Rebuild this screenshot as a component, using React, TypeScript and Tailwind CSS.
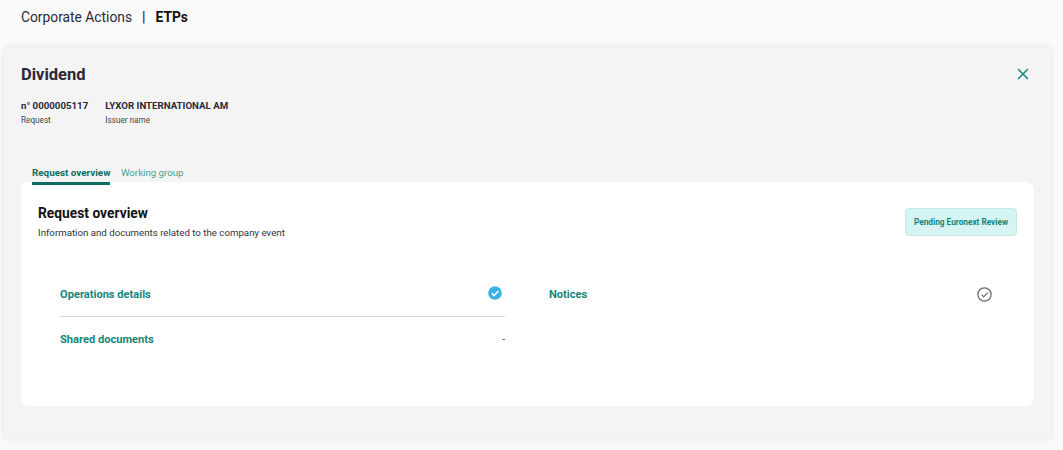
import React from 'react';
import { X } from 'lucide-react';

function DoneIcon() {
  return (
    <svg width="14" height="14" viewBox="0 0 14 14" fill="none">
      <circle cx="7" cy="7" r="6.8" fill="#3cb1e3" />
      <path d="M3.7 7.2 6 9.5 10.4 5" stroke="#fff" strokeWidth="1.6" />
    </svg>
  );
}

function PendingIcon() {
  return (
    <svg width="15" height="15" viewBox="0 0 15 15" fill="none">
      <circle cx="7.5" cy="7.5" r="6.6" stroke="#6b6b6b" strokeWidth="1.3" />
      <path d="M4.6 7.7 6.7 9.8 10.6 5.6" stroke="#6b6b6b" strokeWidth="1.2" />
    </svg>
  );
}

export default function App() {
  return (
    <div className="w-[1063px] h-[450px] overflow-hidden bg-[#fafafa] font-['Roboto',sans-serif] text-[#2b2838]">
      <div className="h-[47px] pl-[21px] pt-[9px] flex items-start text-[13.8px] leading-[17px]">
        <span>Corporate Actions</span>
        <span className="ml-[10px] font-bold">|</span>
        <span className="ml-[10px] font-bold text-[#111]">ETPs</span>
      </div>

      <div className="ml-[4px] w-[1047px] h-[392px] rounded-[6px] bg-[#f4f4f4] shadow-[0_0_6px_rgba(0,0,0,0.1)] pt-[17px] px-[17px]">
        <div className="flex items-start justify-between">
          <h1 className="text-[16.5px] leading-[22px] font-bold">Dividend</h1>
          <X className="w-[18px] h-[18px] mt-[1px] mr-[2px] text-[#0b8a7d]" strokeWidth={2} />
        </div>

        <div className="flex gap-[17px] mt-[14px]">
          <div>
            <div className="text-[9.7px] leading-[12px] font-bold">n° 0000005117</div>
            <div className="text-[8.2px] leading-[10px] mt-[3px] text-[#444]">Request</div>
          </div>
          <div>
            <div className="text-[9.7px] leading-[12px] font-bold">LYXOR INTERNATIONAL AM</div>
            <div className="text-[8.2px] leading-[10px] mt-[3px] text-[#444]">Issuer name</div>
          </div>
        </div>

        <div className="flex gap-[10.5px] mt-[41px] pl-[11px] leading-[13px]">
          <div className="text-[9.85px] font-bold text-[#0e6b62] border-b-[3px] border-[#0e6b62] h-[19px] -mb-[3px] relative z-10">Request overview</div>
          <div className="text-[9.7px] text-[#46a096]">Working group</div>
        </div>

        <div className="w-[1013px] h-[224px] rounded-[8px] bg-white pt-[23px] px-[17px]">
          <div className="flex justify-between items-start">
            <div>
              <h2 className="text-[13.8px] leading-[17px] font-bold text-[#111]">Request overview</h2>
              <p className="text-[9.7px] leading-[12px] mt-[5px] text-[#333]">Information and documents related to the company event</p>
            </div>
            <div className="mt-[3px] w-[112px] h-[28px] flex items-center justify-center rounded-[4px] bg-[#d5f4f2] border border-[#bfeae6] text-[8.25px] font-bold text-[#14857a]">
              Pending Euronext Review
            </div>
          </div>

          <div className="flex mt-[45px] pl-[22px] pr-[24px]">
            <div className="w-[445px]">
              <div className="h-[33px] flex justify-between items-start border-b border-[#dcdcdc] pt-[4px]">
                <span className="text-[11.1px] leading-[14px] font-bold text-[#14857a]">Operations details</span>
                <span className="mr-[3px] -mt-[2px]"><DoneIcon /></span>
              </div>
              <div className="flex justify-between items-start pt-[16px]">
                <span className="text-[11.1px] leading-[14px] font-bold text-[#14857a]">Shared documents</span>
                <span className="text-[10px] leading-[14px] text-[#444]">-</span>
              </div>
            </div>
            <div className="flex-1 ml-[44px] flex justify-between items-start pt-[4px]">
              <span className="text-[11.1px] leading-[14px] font-bold text-[#14857a]">Notices</span>
              <span className="mr-[1px] -mt-[1px]"><PendingIcon /></span>
            </div>
          </div>
        </div>
      </div>
    </div>
  );
}
